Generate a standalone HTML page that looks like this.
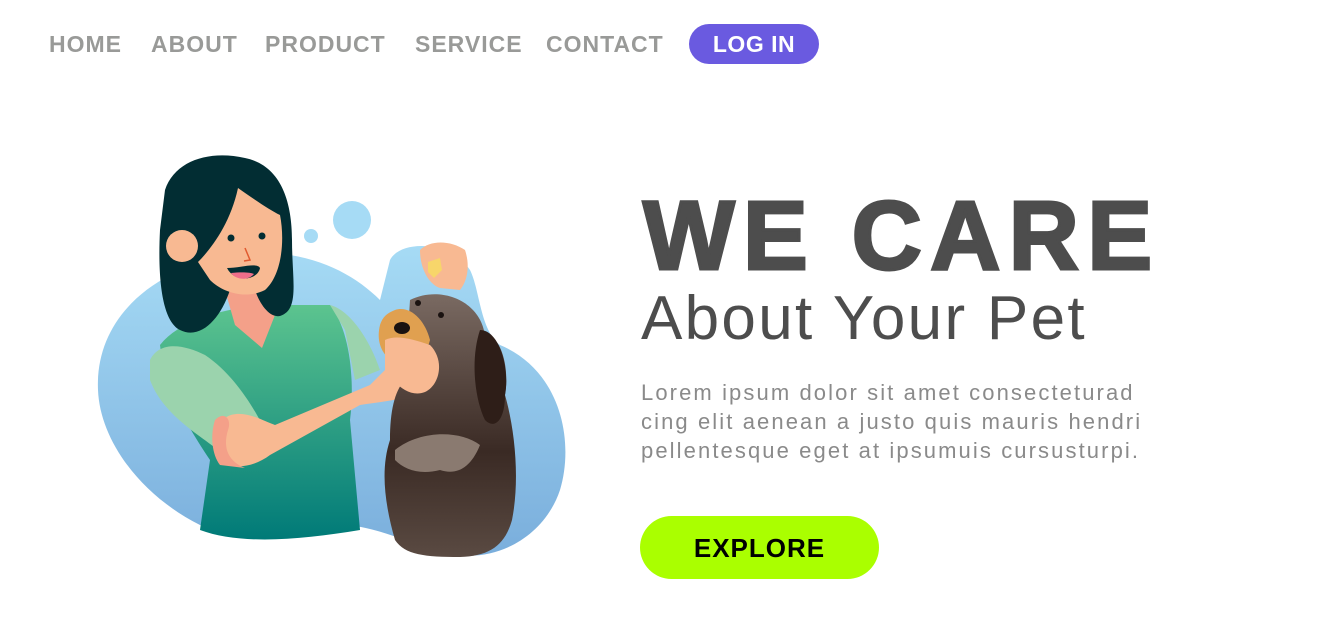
<!DOCTYPE html>
<html><head><meta charset="utf-8"><style>
html,body{margin:0;padding:0;background:#fff;width:1323px;height:626px;overflow:hidden;font-family:"Liberation Sans",sans-serif}
.nav a{position:absolute;top:31px;font-size:23px;font-weight:bold;color:#999a98;text-decoration:none;letter-spacing:1px;white-space:nowrap}
.login{position:absolute;left:689px;top:24px;width:130px;height:40px;border-radius:20px;background:#6a5ae0;color:#fff;font-size:23px;font-weight:bold;text-align:center;line-height:41px;letter-spacing:0.5px}
.t{position:absolute;white-space:nowrap;color:#4d4d4d}
.p{position:absolute;left:641px;font-size:22px;color:#8a8a8a;white-space:nowrap;letter-spacing:2.1px}
.btn{position:absolute;left:640px;top:516px;width:239px;height:63px;border-radius:32px;background:#aaff00;color:#000;font-weight:bold;font-size:26px;text-align:center;line-height:64px;letter-spacing:1px}
</style></head><body>
<div class="nav">
<a style="left:49px">HOME</a>
<a style="left:151px">ABOUT</a>
<a style="left:265px">PRODUCT</a>
<a style="left:415px">SERVICE</a>
<a style="left:546px">CONTACT</a>
</div>
<div class="login">LOG IN</div>

<svg width="1323" height="626" style="position:absolute;left:0;top:0" xmlns="http://www.w3.org/2000/svg">
<defs>
<linearGradient id="bl" x1="0" y1="0" x2="0" y2="1"><stop offset="0" stop-color="#a6dbf5"/><stop offset="1" stop-color="#7aaedc"/></linearGradient>
<linearGradient id="gr" x1="0" y1="0" x2="0" y2="1"><stop offset="0" stop-color="#5cc48f"/><stop offset="1" stop-color="#007a78"/></linearGradient>
<linearGradient id="dg" x1="0" y1="0" x2="0" y2="1"><stop offset="0" stop-color="#7a6a62"/><stop offset="0.6" stop-color="#3a2a24"/><stop offset="1" stop-color="#5a4a42"/></linearGradient>
</defs>
<path d="M98 390 C95 320 150 270 230 255 C300 245 350 270 380 300 L390 260 C400 240 450 240 470 270 C480 290 480 330 500 345 C560 370 575 440 560 490 C545 535 500 560 460 555 C420 550 380 525 340 525 C290 525 240 545 200 525 C140 495 100 440 98 390 Z" fill="url(#bl)"/>
<circle cx="352" cy="220" r="19" fill="#a6dbf5"/>
<circle cx="311" cy="236" r="7" fill="#a6dbf5"/>
<path d="M160 345 C180 320 220 310 260 305 L330 305 C350 330 355 380 350 420 L360 530 C300 540 240 545 200 530 L210 460 C190 430 165 390 160 345 Z" fill="url(#gr)"/>
<path d="M330 305 C350 310 370 340 380 370 L355 380 L345 330 Z" fill="#9bd3ad"/>
<path d="M150 360 C160 340 185 345 205 355 C235 375 255 410 265 430 L230 460 C210 440 165 420 150 380 Z" fill="#9bd3ad"/>
<path d="M225 290 L270 290 L275 315 L262 348 L235 325 Z" fill="#f4a089"/>
<path d="M165 190 C175 160 210 150 245 158 C280 165 292 200 292 240 C292 280 300 310 280 316 C270 318 260 305 255 290 L230 290 C220 320 200 340 180 330 C160 320 158 270 160 230 Z" fill="#022d33"/>
<path d="M238 188 C255 200 270 210 280 215 C285 240 282 275 265 290 C245 300 222 292 210 280 L198 262 C210 250 230 225 238 188 Z" fill="#f8b992"/>
<circle cx="182" cy="246" r="16" fill="#f8b992"/>
<circle cx="231" cy="238" r="3.5" fill="#022d33"/><circle cx="262" cy="236" r="3.5" fill="#022d33"/>
<path d="M245 248 L250 260 L244 261" stroke="#e05a30" stroke-width="1.5" fill="none"/>
<path d="M227 268 C240 268 257 262 260 268 C258 280 235 284 227 268 Z" fill="#022d33"/>
<path d="M231 273 C240 272 250 272 254 274 C248 281 236 280 231 273 Z" fill="#ee6e8a"/>
<path d="M215 430 C230 400 260 420 275 425 L370 385 L395 360 C410 350 430 360 428 380 C420 400 390 400 360 405 L270 455 C250 470 225 470 215 455 Z" fill="#f8b992"/>
<path d="M215 420 C225 410 232 420 228 430 C222 450 230 462 245 468 L220 465 C212 455 210 435 215 420 Z" fill="#f4a089"/>
<path d="M410 300 C440 285 480 300 485 335 C500 335 510 365 505 395 C515 430 520 480 512 520 C505 545 490 556 460 557 C425 557 405 555 395 540 C385 505 380 470 390 440 C390 410 395 390 405 380 Z" fill="url(#dg)"/>
<path d="M480 330 C500 330 510 370 505 395 C505 420 495 430 485 420 C475 400 470 360 480 330 Z" fill="#2e1e18"/>
<path d="M395 450 C420 430 460 430 480 445 C470 470 455 475 440 470 C420 475 405 470 395 460 Z" fill="#8a7a70"/>
<path d="M395 310 C410 305 425 320 430 340 C425 360 410 370 400 365 C385 360 375 345 380 325 C383 315 390 312 395 310 Z" fill="#e0a050"/>
<ellipse cx="402" cy="328" rx="8" ry="6" fill="#1a1210"/>
<circle cx="418" cy="303" r="3" fill="#1a1210"/><circle cx="441" cy="315" r="3" fill="#1a1210"/>
<path d="M420 250 C430 240 450 240 465 250 C470 265 468 280 460 290 L440 288 C430 285 420 270 420 250 Z" fill="#f8b992"/>
<path d="M428 262 L440 258 L442 270 L434 278 L428 272 Z" fill="#f7d66a"/>
<path d="M385 340 C395 335 410 338 430 345 C445 360 440 385 425 392 C410 398 395 385 385 370 Z" fill="#f8b992"/>
</svg>

<div class="t" style="left:643px;top:186px;font-size:97px;font-weight:bold;letter-spacing:8.5px;line-height:100px;-webkit-text-stroke:3px #4d4d4d">WE CARE</div>
<div class="t" style="left:641px;top:286px;font-size:62px;line-height:66px;letter-spacing:2.3px">About Your Pet</div>
<div class="p" style="top:380px">Lorem ipsum dolor sit amet consecteturad</div>
<div class="p" style="top:409px">cing elit aenean a justo quis mauris hendri</div>
<div class="p" style="top:438px">pellentesque eget at ipsumuis cursusturpi.</div>
<div class="btn">EXPLORE</div>
</body></html>
